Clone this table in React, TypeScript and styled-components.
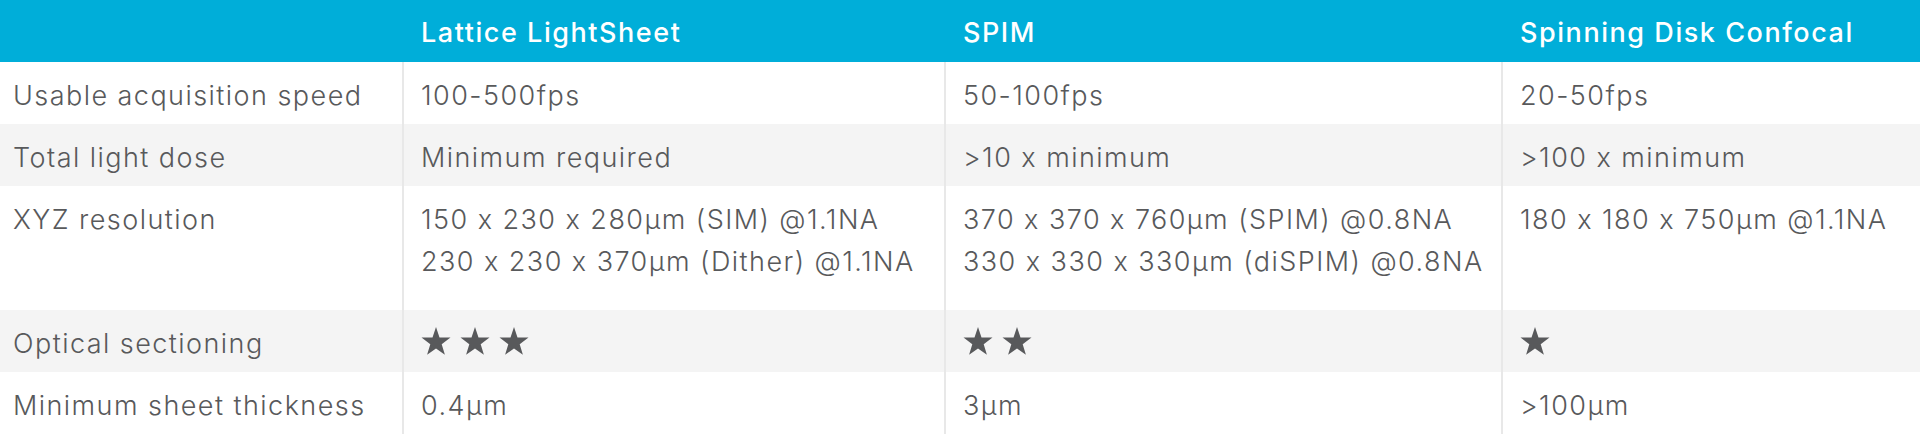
import React from "react";
import styled, { createGlobalStyle } from "styled-components";

const GlobalStyle = createGlobalStyle`
  html, body { margin: 0; padding: 0; background: #ffffff; }
  body { font-family: Inter, "Open Sans", sans-serif; -webkit-font-smoothing: antialiased; }
`;

const Table = styled.div`
  width: 1920px;
  display: flex;
  flex-direction: column;
`;

const Row = styled.div<{ $striped?: boolean; $tall?: boolean; $header?: boolean }>`
  display: grid;
  grid-template-columns: 402px 542px 557px 1fr;
  height: ${(p) => (p.$tall ? 124 : 62)}px;
  background: ${(p) => (p.$header ? "#00aed9" : p.$striped ? "#f4f4f4" : "#ffffff")};
`;

const Cell = styled.div<{ $first?: boolean }>`
  box-sizing: border-box;
  padding: 13px 0 0 ${(p) => (p.$first ? 13 : 17)}px;
  border-left: ${(p) => (p.$first ? "0" : "2px solid #e8e8e8")};
  font-size: 27px;
  font-weight: 300;
  line-height: 42px;
  color: #58595b;
  letter-spacing: 1.45px;
  white-space: nowrap;
`;

const HeadCell = styled.div<{ $first?: boolean }>`
  box-sizing: border-box;
  padding: 12px 0 0 ${(p) => (p.$first ? 13 : 19)}px;
  font-size: 27px;
  font-weight: 500;
  line-height: 42px;
  color: #ffffff;
  letter-spacing: 1.55px;
  white-space: nowrap;
`;

const Stars = styled.div`
  display: flex;
  gap: 9px;
  padding-top: 4px;
`;

const Star = () => (
  <svg width="30" height="28" viewBox="0 0 30 28">
    <polygon
      points="15,0 18.5,10.4 29.5,10.6 20.7,17.2 23.9,27.7 15,21.4 6.1,27.7 9.3,17.2 0.5,10.6 11.5,10.4"
      fill="#58595b"
    />
  </svg>
);

const StarRating = ({ n }: { n: number }) => (
  <Stars>
    {Array.from({ length: n }).map((_, i) => (
      <Star key={i} />
    ))}
  </Stars>
);

export default function App() {
  return (
    <>
      <GlobalStyle />
      <Table>
        <Row $header>
          <HeadCell $first />
          <HeadCell>Lattice LightSheet</HeadCell>
          <HeadCell>SPIM</HeadCell>
          <HeadCell>Spinning Disk Confocal</HeadCell>
        </Row>
        <Row>
          <Cell $first>Usable acquisition speed</Cell>
          <Cell>100-500fps</Cell>
          <Cell>50-100fps</Cell>
          <Cell>20-50fps</Cell>
        </Row>
        <Row $striped>
          <Cell $first>Total light dose</Cell>
          <Cell>Minimum required</Cell>
          <Cell>&gt;10 x minimum</Cell>
          <Cell>&gt;100 x minimum</Cell>
        </Row>
        <Row $tall>
          <Cell $first>XYZ resolution</Cell>
          <Cell>
            150 x 230 x 280µm (SIM) @1.1NA
            <br />
            230 x 230 x 370µm (Dither) @1.1NA
          </Cell>
          <Cell>
            370 x 370 x 760µm (SPIM) @0.8NA
            <br />
            330 x 330 x 330µm (diSPIM) @0.8NA
          </Cell>
          <Cell>180 x 180 x 750µm @1.1NA</Cell>
        </Row>
        <Row $striped>
          <Cell $first>Optical sectioning</Cell>
          <Cell>
            <StarRating n={3} />
          </Cell>
          <Cell>
            <StarRating n={2} />
          </Cell>
          <Cell>
            <StarRating n={1} />
          </Cell>
        </Row>
        <Row>
          <Cell $first>Minimum sheet thickness</Cell>
          <Cell>0.4µm</Cell>
          <Cell>3µm</Cell>
          <Cell>&gt;100µm</Cell>
        </Row>
      </Table>
    </>
  );
}
